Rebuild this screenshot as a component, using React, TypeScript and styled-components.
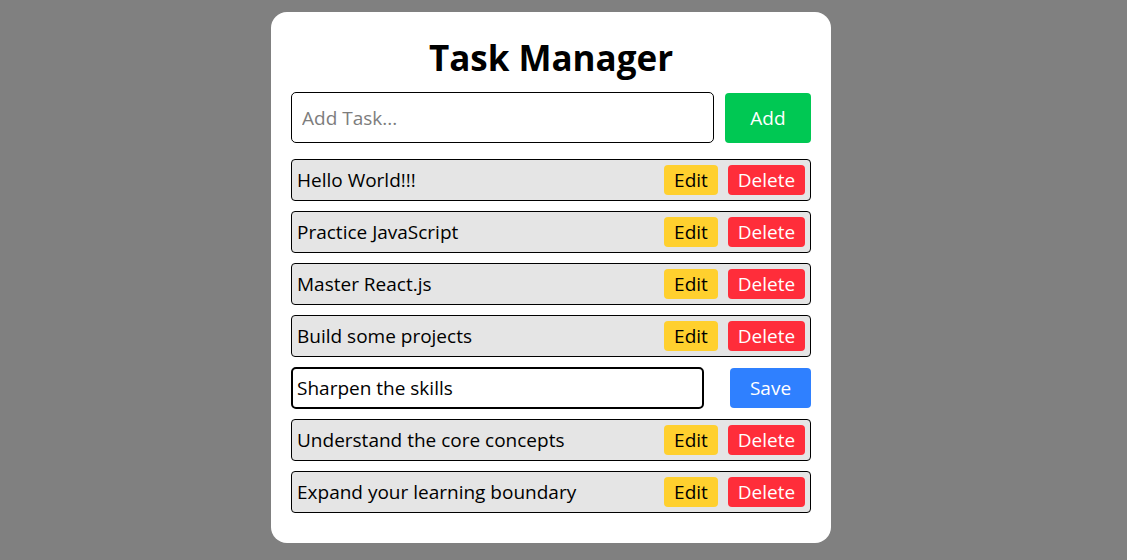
import React from "react";
import styled, { createGlobalStyle } from "styled-components";

const Global = createGlobalStyle`
  html, body { margin: 0; padding: 0; background: #808080; }
  body { font-family: "Open Sans", "Noto Sans", sans-serif; }
  * { box-sizing: border-box; }
`;

const Page = styled.div`
  display: flex;
  justify-content: center;
  padding: 12px 25px 0 0;
  min-height: 560px;
`;

const Card = styled.div`
  width: 560px;
  background: #ffffff;
  border-radius: 16px;
  padding: 20px 20px 20px;
  align-self: flex-start;
`;

const Title = styled.h1`
  margin: 4px 0 12px;
  text-align: center;
  font-size: 35px;
  line-height: 44px;
  font-weight: 700;
  color: #000;
`;

const AddRow = styled.div`
  display: flex;
  align-items: center;
  gap: 11px;
  margin-bottom: 16px;
`;

const TaskInput = styled.input`
  flex: 1;
  height: 51px;
  border: 1px solid #000;
  border-radius: 5px;
  padding: 0 10px;
  font-family: inherit;
  font-size: 19px;
  outline: none;
  &::placeholder { color: #7d7d7d; }
`;

const Button = styled.button<{ $bg: string; $fg: string; $w: number; $h: number }>`
  width: ${(p) => p.$w}px;
  height: ${(p) => p.$h}px;
  background: ${(p) => p.$bg};
  color: ${(p) => p.$fg};
  border: none;
  border-radius: 4px;
  font-family: inherit;
  font-size: 19px;
  padding: 0;
  cursor: pointer;
  flex-shrink: 0;
`;

const List = styled.div`
  display: flex;
  flex-direction: column;
  gap: 10px;
  padding-bottom: 10px;
`;

const TaskRow = styled.div`
  display: flex;
  align-items: center;
  height: 42px;
  background: #e5e5e5;
  border: 1px solid #000;
  border-radius: 4px;
  padding: 0 5px 0 5px;
  gap: 10px;
`;

const TaskText = styled.span`
  flex: 1;
  font-size: 19px;
  color: #000;
`;

const EditRow = styled.div`
  display: flex;
  align-items: center;
  height: 42px;
  gap: 26px;
`;

const EditInput = styled.input`
  flex: 1;
  height: 42px;
  border: 2px solid #000;
  border-radius: 5px;
  padding: 0 4px;
  font-family: inherit;
  font-size: 19px;
  color: #000;
  outline: none;
`;

const tasks = [
  "Hello World!!!",
  "Practice JavaScript",
  "Master React.js",
  "Build some projects",
  "Sharpen the skills",
  "Understand the core concepts",
  "Expand your learning boundary",
];

export default function App() {
  return (
    <>
      <Global />
      <Page>
        <Card>
          <Title>Task Manager</Title>
          <AddRow>
            <TaskInput placeholder="Add Task..." />
            <Button $bg="#00c853" $fg="#fff" $w={86} $h={50}>Add</Button>
          </AddRow>
          <List>
            {tasks.map((t, i) =>
              i === 4 ? (
                <EditRow key={t}>
                  <EditInput defaultValue={t} />
                  <Button $bg="#2f80ff" $fg="#fff" $w={81} $h={40}>Save</Button>
                </EditRow>
              ) : (
                <TaskRow key={t}>
                  <TaskText>{t}</TaskText>
                  <Button $bg="#ffd02e" $fg="#000" $w={54} $h={30}>Edit</Button>
                  <Button $bg="#ff2d3a" $fg="#fff" $w={77} $h={30}>Delete</Button>
                </TaskRow>
              )
            )}
          </List>
        </Card>
      </Page>
    </>
  );
}
